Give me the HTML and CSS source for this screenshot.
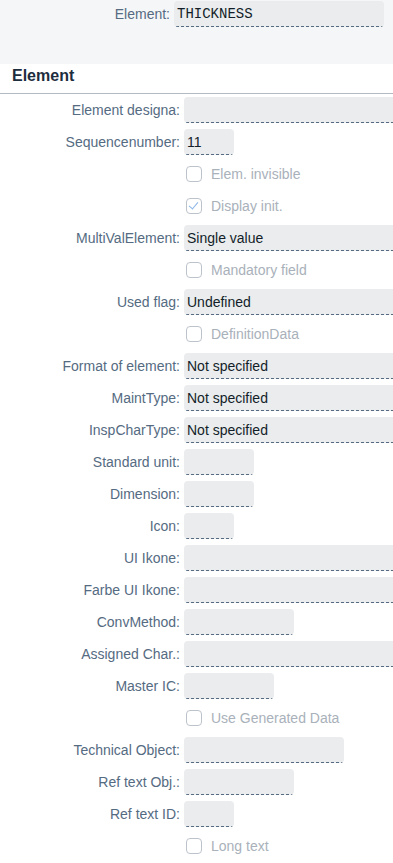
FILE: index.html
```html
<!DOCTYPE html>
<html lang="en">

<head>
    <meta charset="UTF-8">
    <meta name="viewport" content="width=device-width, initial-scale=1.0">
    <title>Element</title>
    <link rel="stylesheet" href="styles.css">
</head>

<body>
    <header class="object-header">
        <div class="header-row">
            <span class="label">Element:</span>
            <span class="field mono">THICKNESS</span>
        </div>
    </header>

    <section class="group">
        <h2 class="group-title">Element</h2>

        <div class="form">
            <div class="row"><span class="label">Element designa:</span><span class="field full"></span></div>
            <div class="row"><span class="label">Sequencenumber:</span><span class="field w50">11</span></div>
            <div class="row"><span></span><span class="check"><i class="box"></i>Elem. invisible</span></div>
            <div class="row"><span></span><span class="check"><i class="box checked"></i>Display init.</span></div>
            <div class="row"><span class="label">MultiValElement:</span><span class="field full">Single value</span></div>
            <div class="row"><span></span><span class="check"><i class="box"></i>Mandatory field</span></div>
            <div class="row"><span class="label">Used flag:</span><span class="field full">Undefined</span></div>
            <div class="row"><span></span><span class="check"><i class="box"></i>DefinitionData</span></div>
            <div class="row"><span class="label">Format of element:</span><span class="field full">Not specified</span></div>
            <div class="row"><span class="label">MaintType:</span><span class="field full">Not specified</span></div>
            <div class="row"><span class="label">InspCharType:</span><span class="field full">Not specified</span></div>
            <div class="row"><span class="label">Standard unit:</span><span class="field w70"></span></div>
            <div class="row"><span class="label">Dimension:</span><span class="field w70"></span></div>
            <div class="row"><span class="label">Icon:</span><span class="field w50"></span></div>
            <div class="row"><span class="label">UI Ikone:</span><span class="field full"></span></div>
            <div class="row"><span class="label">Farbe UI Ikone:</span><span class="field full"></span></div>
            <div class="row"><span class="label">ConvMethod:</span><span class="field w110"></span></div>
            <div class="row"><span class="label">Assigned Char.:</span><span class="field full"></span></div>
            <div class="row"><span class="label">Master IC:</span><span class="field w90"></span></div>
            <div class="row"><span></span><span class="check"><i class="box"></i>Use Generated Data</span></div>
            <div class="row"><span class="label">Technical Object:</span><span class="field w160"></span></div>
            <div class="row"><span class="label">Ref text Obj.:</span><span class="field w110"></span></div>
            <div class="row"><span class="label">Ref text ID:</span><span class="field w50"></span></div>
            <div class="row"><span></span><span class="check"><i class="box"></i>Long text</span></div>
        </div>
    </section>
</body>

</html>
```

FILE: styles.css
```css
* {
    box-sizing: border-box;
}

body {
    margin: 0;
    padding: 0;
    font-family: 'Liberation Sans', Arial, sans-serif;
    font-size: 14px;
    color: #131e29;
    background: #ffffff;
    overflow-x: hidden;
}

.object-header {
    height: 64px;
    background: #f5f6f7;
    padding-top: 1px;
}

.header-row {
    display: grid;
    grid-template-columns: 170px 210px;
    column-gap: 4px;
    align-items: center;
}

.label {
    color: #556b82;
    text-align: right;
    white-space: nowrap;
}

.field {
    display: block;
    height: 26px;
    line-height: 26px;
    padding: 0 3px;
    border-radius: 4px;
    background-color: #eaecee;
    background-image: linear-gradient(to right, #556b82 60%, transparent 0);
    background-size: 5px 1px;
    background-repeat: repeat-x;
    background-position: 2px 100%;
    color: #131e29;
    white-space: nowrap;
    overflow: hidden;
}

.mono {
    font-family: 'Liberation Mono', 'Courier New', monospace;
    font-size: 14px;
}

.group-title {
    margin: 0;
    padding: 0 12px 6px;
    line-height: 23px;
    font-size: 16px;
    font-weight: bold;
    color: #1d2d3e;
    border-bottom: 1px solid #b3bac2;
}

.form {
    display: flex;
    flex-direction: column;
}

.row {
    display: grid;
    grid-template-columns: 180px 1fr;
    column-gap: 4px;
    align-items: center;
    height: 32px;
}

.full {
    width: calc(100% + 12px);
}

.w50 {
    width: 50px;
}

.w70 {
    width: 70px;
}

.w90 {
    width: 90px;
}

.w110 {
    width: 110px;
}

.w160 {
    width: 160px;
}

.check {
    display: flex;
    align-items: center;
    gap: 9px;
    padding-left: 2px;
    color: #a9b1ba;
}

.box {
    display: inline-block;
    width: 16px;
    height: 16px;
    border: 1px solid #bcc3ca;
    border-radius: 4px;
    position: relative;
}

.box.checked::after {
    content: "";
    position: absolute;
    left: 4px;
    top: 1px;
    width: 4px;
    height: 8px;
    border-right: 1px solid #8ab4e6;
    border-bottom: 1px solid #8ab4e6;
    transform: rotate(40deg);
}
```
